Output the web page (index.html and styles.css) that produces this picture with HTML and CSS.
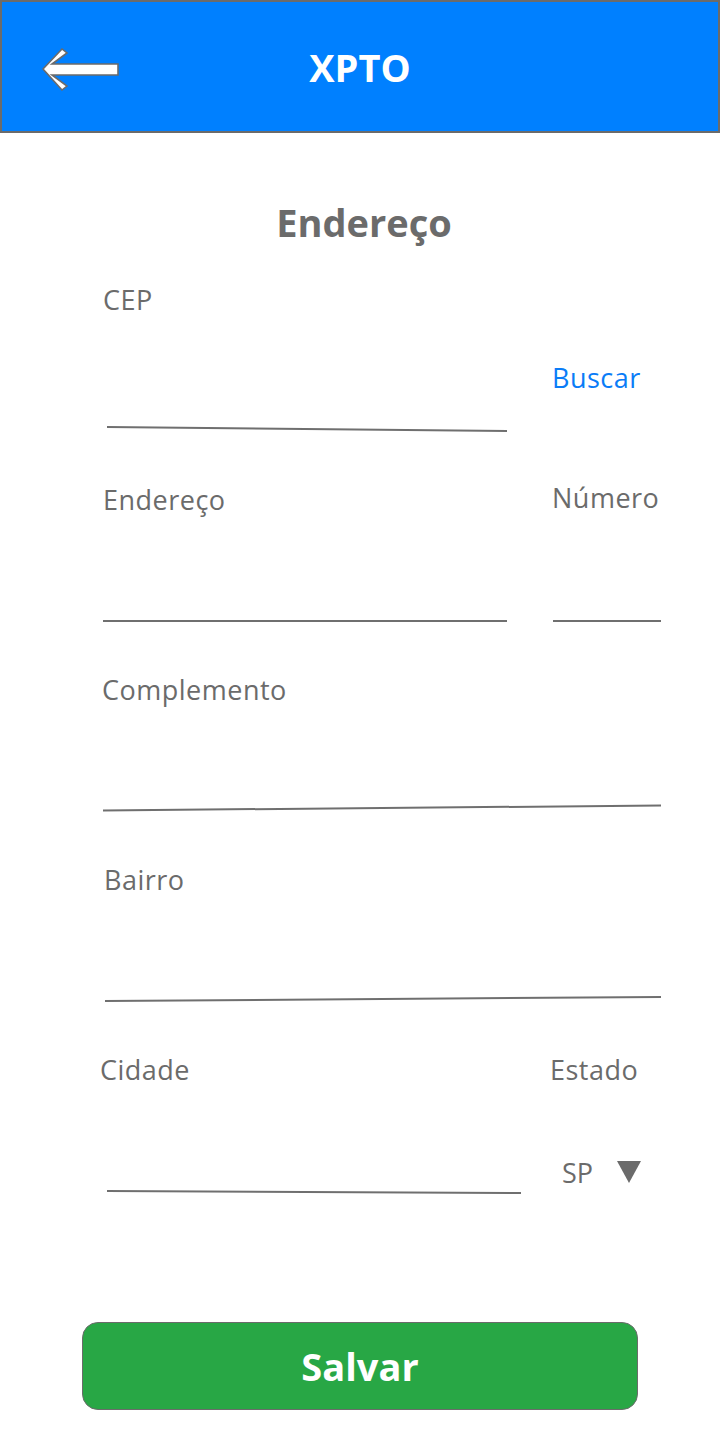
FILE: index.html
```html
<!DOCTYPE html>
<html lang="pt">
<head>
<meta charset="utf-8">
<title>XPTO - Endereço</title>
<link rel="stylesheet" href="styles.css">
</head>
<body>
<header class="topbar">
  <div class="topbar-left">
    <svg class="back" width="82" height="46" viewBox="40 46 82 46" aria-label="Voltar">
      <path d="M44 69 L63 49 L68 53 L53 64 L119 64 L119 75 L53 75 L68 86 L63 90 Z" fill="#fff" stroke="#6b6b6b" stroke-width="1.6" stroke-linejoin="miter"/>
    </svg>
  </div>
  <h1 class="brand">XPTO</h1>
  <div class="topbar-right"></div>
</header>

<main class="form">
  <h2 class="title">Endereço</h2>

  <section class="row row-cep">
    <div class="col-main">
      <div class="label">CEP</div>
      <div class="line line-cep"></div>
    </div>
    <div class="col-side">
      <a class="link">Buscar</a>
    </div>
  </section>

  <section class="row row-end">
    <div class="col-main">
      <div class="label">Endereço</div>
      <div class="line line-end"></div>
    </div>
    <div class="col-side">
      <div class="label label-num">Número</div>
      <div class="line line-num"></div>
    </div>
  </section>

  <section class="row row-comp">
    <div class="col-full">
      <div class="label label-comp">Complemento</div>
      <div class="line line-comp"></div>
    </div>
  </section>

  <section class="row row-bairro">
    <div class="col-full">
      <div class="label label-bairro">Bairro</div>
      <div class="line line-bairro"></div>
    </div>
  </section>

  <section class="row row-cidade">
    <div class="col-main">
      <div class="label label-cidade">Cidade</div>
      <div class="line line-cidade"></div>
    </div>
    <div class="col-side">
      <div class="label label-estado">Estado</div>
      <div class="select">
        <span class="select-value">SP</span>
        <span class="caret"></span>
      </div>
    </div>
  </section>

  <button class="save" type="button">Salvar</button>
</main>
</body>
</html>
```

FILE: styles.css
```css
* { box-sizing: border-box; }

html, body {
  margin: 0;
  padding: 0;
  background: #ffffff;
}

body {
  width: 720px;
  height: 1456px;
  font-family: "Open Sans", "Noto Sans", sans-serif;
  color: #6b6b6b;
  overflow: hidden;
}

.topbar {
  height: 133px;
  background: #0080ff;
  border: 2px solid #6b6b6b;
  display: grid;
  grid-template-columns: 1fr auto 1fr;
  align-items: center;
}

.topbar-left {
  display: flex;
  align-items: center;
  padding-left: 37px;
}

.back { display: block; margin-top: 4px; }

.brand {
  margin: 0;
  color: #ffffff;
  font-size: 38px;
  font-weight: 700;
  line-height: 44px;
}

.form {
  padding: 0 59px 0 103px;
  display: flex;
  flex-direction: column;
}

.title {
  margin: 65px 0 0 -99px;
  width: 720px;
  text-align: center;
  font-size: 38px;
  font-weight: 700;
  line-height: 48px;
  color: #6b6b6b;
}

.row {
  display: flex;
  align-items: flex-start;
}

.col-main { width: 404px; }
.col-side { margin-left: 45px; flex: 1; }
.col-full { width: 558px; }

.label {
  font-size: 27px;
  letter-spacing: 0.5px;
  line-height: 36px;
  height: 36px;
  white-space: nowrap;
}

.line {
  height: 2px;
  background: #6f6f6f;
}

.row-cep { height: 200px; margin-top: 36px; }
.line-cep { margin-top: 110px; margin-left: 4px; transform: rotate(0.57deg); }
.link {
  display: block;
  color: #0a7cf7;
  font-size: 27px;
  letter-spacing: 0.5px;
  line-height: 36px;
  margin-top: 78px;
}

.row-end { height: 190px; }
.line-end { margin-top: 102px; }
.label-num { margin-top: -2px; }
.line-num { margin-top: 104px; margin-left: 1px; }

.row-comp { height: 190px; }
.label-comp { margin-left: -1px; }
.line-comp { margin-top: 99px; transform: rotate(-0.51deg); }

.row-bairro { height: 190px; }
.label-bairro { margin-left: 1px; }
.line-bairro { margin-top: 100px; margin-left: 2px; transform: rotate(-0.41deg); }

.row-cidade { height: 270px; }
.label-cidade { margin-left: -3px; }
.line-cidade { margin-top: 103px; margin-left: 4px; width: 414px; transform: rotate(0.28deg); }
.label-estado { margin-left: -2px; }

.select {
  display: flex;
  align-items: center;
  margin-top: 67px;
  margin-left: 10px;
  height: 36px;
}

.select-value {
  font-size: 27px;
  line-height: 36px;
}

.caret {
  width: 0;
  height: 0;
  margin-left: 24px;
  margin-top: -2px;
  border-left: 12px solid transparent;
  border-right: 12px solid transparent;
  border-top: 22px solid #6b6b6b;
}

.save {
  margin: 0 0 0 -21px;
  width: 556px;
  height: 88px;
  background: #28a745;
  border: 1.5px solid #6b6b6b;
  border-radius: 16px;
  color: #ffffff;
  font-family: "Open Sans", "Noto Sans", sans-serif;
  font-size: 38px;
  font-weight: 700;
  padding: 0;
}
```
